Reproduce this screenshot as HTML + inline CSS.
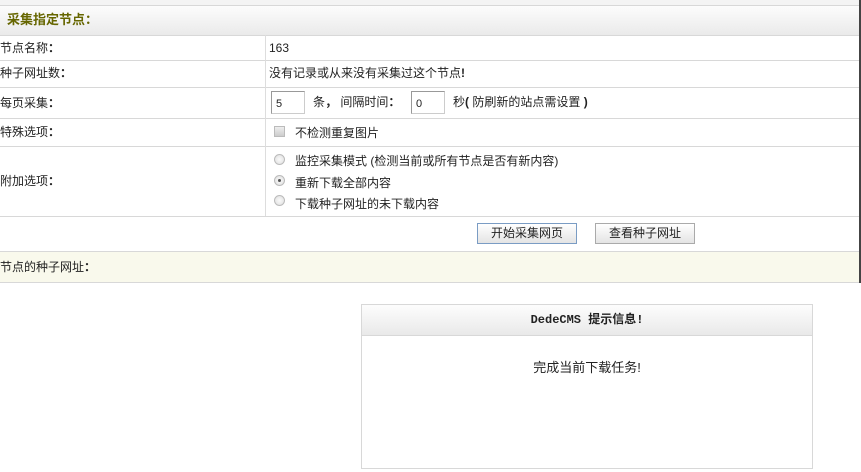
<!DOCTYPE html>
<html><head><meta charset="utf-8"><style>
*{margin:0;padding:0;box-sizing:border-box}
body{width:861px;height:472px;background:#fff;font-family:"Liberation Sans","Noto Sans CJK SC",sans-serif;font-size:12px;color:#222;position:relative;overflow:hidden}
.a{position:absolute}
.hl{position:absolute;left:0;width:860px;height:1px;background:#d8d8d8}
.t{position:absolute;line-height:14px;white-space:nowrap}
.inp{position:absolute;border:1px solid #999;border-right-color:#ccc;border-bottom-color:#ccc;background:#fff;height:23px;padding:6px 0 0 4px;font-size:11px}
.rad{position:absolute;width:11px;height:11px;border-radius:50%;border:1px solid #bbb;background:radial-gradient(#fafafa,#ddd)}
.btn{position:absolute;height:21px;border:1px solid #aaa;background:linear-gradient(#fff,#e4e4e4);text-align:center;line-height:19px}
.c{font-family:"Noto Sans CJK SC",sans-serif;font-weight:bold}
</style></head><body>
<div class="a" style="left:0;top:0;width:860px;height:5px;background:#f4f4f4"></div>
<div class="a" style="left:0;top:5px;width:860px;height:30px;background:linear-gradient(#fdfdfd,#eaeaea)"></div>
<div class="hl" style="top:5px"></div>
<div class="hl" style="top:35px"></div>
<div class="hl" style="top:60px"></div>
<div class="hl" style="top:87px"></div>
<div class="hl" style="top:118px"></div>
<div class="hl" style="top:146px"></div>
<div class="hl" style="top:216px"></div>
<div class="a" style="left:0;top:251px;width:860px;height:31px;background:#f9f9ec"></div>
<div class="hl" style="top:251px"></div>
<div class="hl" style="top:282px"></div>
<div class="a" style="left:265px;top:35px;width:1px;height:181px;background:#ddd"></div>
<div class="a" style="left:859px;top:0;width:2px;height:283px;background:#444"></div>
<div class="t" style="left:7px;top:12px;color:#666600;font-weight:bold;font-size:13px">采集指定节点<span class="c">：</span></div>
<div class="t" style="left:0;top:41px">节点名称<span class="c">：</span></div>
<div class="t" style="left:269px;top:41px">163</div>
<div class="t" style="left:0;top:66px">种子网址数<span class="c">：</span></div>
<div class="t" style="left:269px;top:66px">没有记录或从来没有采集过这个节点<b>!</b></div>
<div class="t" style="left:0;top:96px">每页采集<span class="c">：</span></div>
<div class="inp" style="left:271px;top:91px;width:34px">5</div>
<div class="t" style="left:313px;top:95px">条<span class="c">，</span> 间隔时间<span class="c">：</span></div>
<div class="inp" style="left:411px;top:91px;width:34px">0</div>
<div class="t" style="left:453px;top:95px">秒<b>(</b> 防刷新的站点需设置 <b>)</b></div>
<div class="t" style="left:0;top:125px">特殊选项<span class="c">：</span></div>
<div class="a" style="left:274px;top:126px;width:11px;height:11px;border:1px solid #bbb;background:linear-gradient(#eee,#ccc)"></div>
<div class="t" style="left:295px;top:126px">不检测重复图片</div>
<div class="t" style="left:0;top:174px">附加选项<span class="c">：</span></div>
<div class="rad" style="left:274px;top:154px"></div>
<div class="t" style="left:295px;top:154px">监控采集模式 (检测当前或所有节点是否有新内容)</div>
<div class="rad" style="left:274px;top:175px"><div class="a" style="left:3px;top:3px;width:3px;height:3px;border-radius:50%;background:#555"></div></div>
<div class="t" style="left:295px;top:176px">重新下载全部内容</div>
<div class="rad" style="left:274px;top:195px"></div>
<div class="t" style="left:295px;top:197px">下载种子网址的未下载内容</div>
<div class="btn" style="left:477px;top:223px;width:100px;border-color:#7a9cc4">开始采集网页</div>
<div class="btn" style="left:595px;top:223px;width:100px">查看种子网址</div>
<div class="t" style="left:0;top:260px">节点的种子网址<span class="c">：</span></div>
<div class="a" style="left:361px;top:304px;width:452px;height:165px;border:1px solid #d8d8d8"></div>
<div class="a" style="left:362px;top:305px;width:450px;height:31px;background:linear-gradient(#fdfdfd,#e9e9e9);border-bottom:1px solid #d8d8d8"></div>
<div class="t" style="left:362px;top:313px;width:450px;text-align:center;font-weight:bold;font-family:'Liberation Mono','Noto Sans CJK SC',monospace">DedeCMS 提示信息!</div>
<div class="t" style="left:362px;top:361px;width:450px;text-align:center;font-size:13px">完成当前下载任务!</div>
</body></html>
